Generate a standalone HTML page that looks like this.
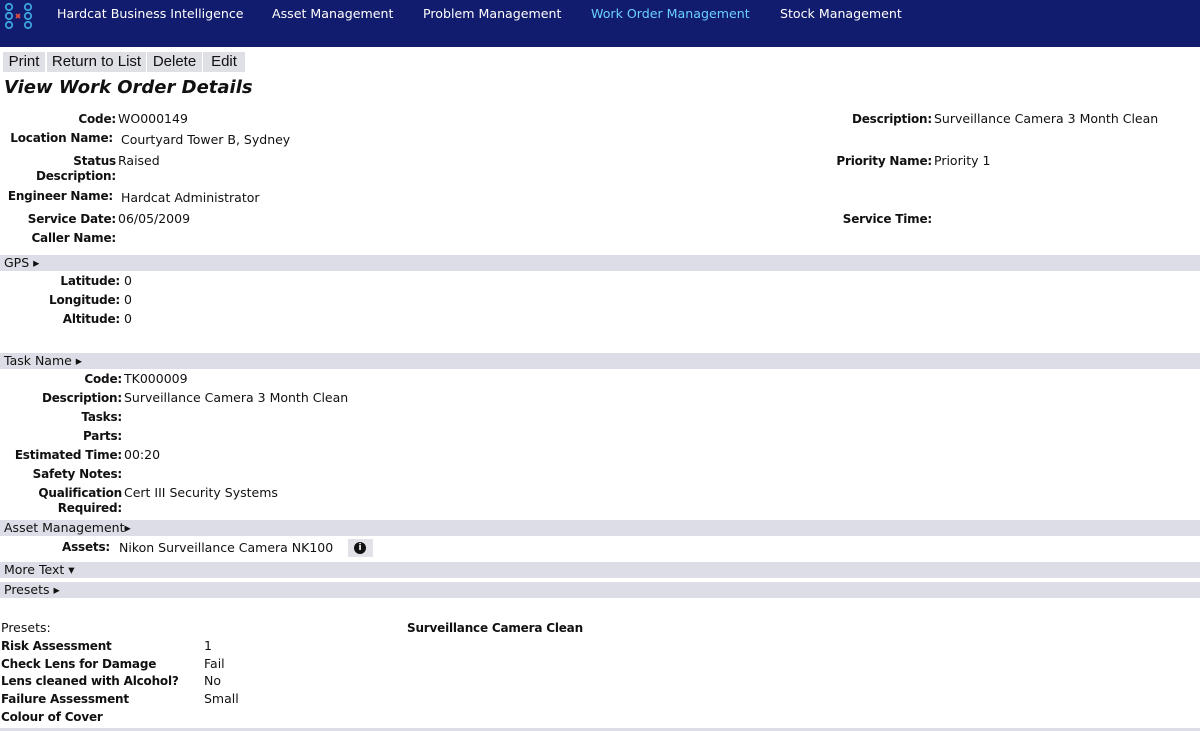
<!DOCTYPE html>
<html><head><meta charset="utf-8"><style>
body{margin:0;width:1200px;height:731px;position:relative;background:#fff;font-family:"DejaVu Sans","Liberation Sans",sans-serif;font-size:12.5px;color:#111;overflow:hidden}
.hd{position:absolute;left:0;top:0;width:1200px;height:47px;background:#121c6e}
.nav{position:absolute;top:6px;color:#fff;font-size:12.6px}
.btn{position:absolute;top:52px;height:20px;background:#dfdfe6;font-family:"Liberation Sans",sans-serif;font-size:15px;line-height:20px;color:#111;text-align:center}
.l{position:absolute;font-weight:bold;text-align:right;white-space:nowrap;font-size:12px;letter-spacing:-0.2px;padding-top:1px}
.v{position:absolute;white-space:nowrap}
.band{position:absolute;left:0;width:1200px;height:16px;background:#dcdde6;line-height:16px}
.band span{padding-left:4px}
.p{position:absolute;left:1px;font-weight:bold;white-space:nowrap;font-size:12px;letter-spacing:-0.2px;padding-top:1px}
.pv{position:absolute;left:204px}
</style></head><body>
<div class="hd">
<svg width="40" height="34" style="position:absolute;left:0;top:0" fill="none" stroke="#3ba3dc" stroke-width="1.8">
<circle cx="9" cy="7" r="3.2"/><circle cx="9" cy="16" r="3.2"/><circle cx="9" cy="25" r="3.2"/>
<circle cx="28" cy="7" r="3.2"/><circle cx="28" cy="16" r="3.2"/><circle cx="28" cy="25" r="3.2"/>
<path d="M16 14l4 4M20 14l-4 4" stroke="#e0504a"/></svg>
<div class="nav" style="left:57px">Hardcat Business Intelligence</div>
<div class="nav" style="left:272px">Asset Management</div>
<div class="nav" style="left:423px">Problem Management</div>
<div class="nav" style="left:591px;color:#6ad0ff">Work Order Management</div>
<div class="nav" style="left:780px">Stock Management</div>
</div>
<div class="btn" style="left:3px;width:42px">Print</div>
<div class="btn" style="left:47px;width:99px">Return to List</div>
<div class="btn" style="left:147px;width:55px">Delete</div>
<div class="btn" style="left:203px;width:42px">Edit</div>
<div style="position:absolute;left:4px;top:77px;font-size:18px;font-weight:bold;font-style:italic">View Work Order Details</div>

<div class="l" style="right:1084px;top:111px">Code:</div><div class="v" style="left:118px;top:111px">WO000149</div>
<div class="l" style="right:1087px;top:130px">Location Name:</div><div class="v" style="left:121px;top:132px">Courtyard Tower B, Sydney</div>
<div class="l" style="right:1084px;top:153px;line-height:15px">Status<br>Description:</div><div class="v" style="left:118px;top:153px">Raised</div>
<div class="l" style="right:1087px;top:188px">Engineer Name:</div><div class="v" style="left:121px;top:190px">Hardcat Administrator</div>
<div class="l" style="right:1084px;top:211px">Service Date:</div><div class="v" style="left:118px;top:211px">06/05/2009</div>
<div class="l" style="right:1084px;top:230px">Caller Name:</div>

<div class="l" style="right:268px;top:111px">Description:</div><div class="v" style="left:934px;top:111px">Surveillance Camera 3 Month Clean</div>
<div class="l" style="right:268px;top:153px">Priority Name:</div><div class="v" style="left:934px;top:153px">Priority 1</div>
<div class="l" style="right:268px;top:211px">Service Time:</div>

<div class="band" style="top:255px"><span>GPS ▸</span></div>
<div class="l" style="right:1080px;top:273px">Latitude:</div><div class="v" style="left:124px;top:273px">0</div>
<div class="l" style="right:1080px;top:292px">Longitude:</div><div class="v" style="left:124px;top:292px">0</div>
<div class="l" style="right:1080px;top:311px">Altitude:</div><div class="v" style="left:124px;top:311px">0</div>

<div class="band" style="top:353px"><span>Task Name ▸</span></div>
<div class="l" style="right:1078px;top:371px">Code:</div><div class="v" style="left:124px;top:371px">TK000009</div>
<div class="l" style="right:1078px;top:390px">Description:</div><div class="v" style="left:124px;top:390px">Surveillance Camera 3 Month Clean</div>
<div class="l" style="right:1078px;top:409px">Tasks:</div>
<div class="l" style="right:1078px;top:428px">Parts:</div>
<div class="l" style="right:1078px;top:447px">Estimated Time:</div><div class="v" style="left:124px;top:447px">00:20</div>
<div class="l" style="right:1078px;top:466px">Safety Notes:</div>
<div class="l" style="right:1078px;top:485px;line-height:15px">Qualification<br>Required:</div><div class="v" style="left:124px;top:485px">Cert III Security Systems</div>

<div class="band" style="top:520px"><span>Asset Management▸</span></div>
<div class="l" style="right:1090px;top:539px">Assets:</div><div class="v" style="left:119px;top:540px">Nikon Surveillance Camera NK100</div>
<div style="position:absolute;left:348px;top:539px;width:25px;height:18px;background:#e2e2e8"><div style="position:absolute;left:6px;top:3px;width:12px;height:12px;border-radius:50%;background:#111;color:#fff;font-size:9px;font-weight:bold;text-align:center;line-height:12px">i</div></div>

<div class="band" style="top:562px"><span>More Text ▾</span></div>
<div class="band" style="top:582px"><span>Presets ▸</span></div>

<div class="v" style="left:1px;top:620px">Presets:</div>
<div class="v" style="left:407px;top:621px;font-weight:bold;font-size:12px;letter-spacing:-0.2px">Surveillance Camera Clean</div>
<div class="p" style="top:638px">Risk Assessment</div><div class="pv v" style="top:638px">1</div>
<div class="p" style="top:656px">Check Lens for Damage</div><div class="pv v" style="top:656px">Fail</div>
<div class="p" style="top:673px">Lens cleaned with Alcohol?</div><div class="pv v" style="top:673px">No</div>
<div class="p" style="top:691px">Failure Assessment</div><div class="pv v" style="top:691px">Small</div>
<div class="p" style="top:709px">Colour of Cover</div>
<div class="band" style="top:728px;height:3px"></div>
</body></html>
